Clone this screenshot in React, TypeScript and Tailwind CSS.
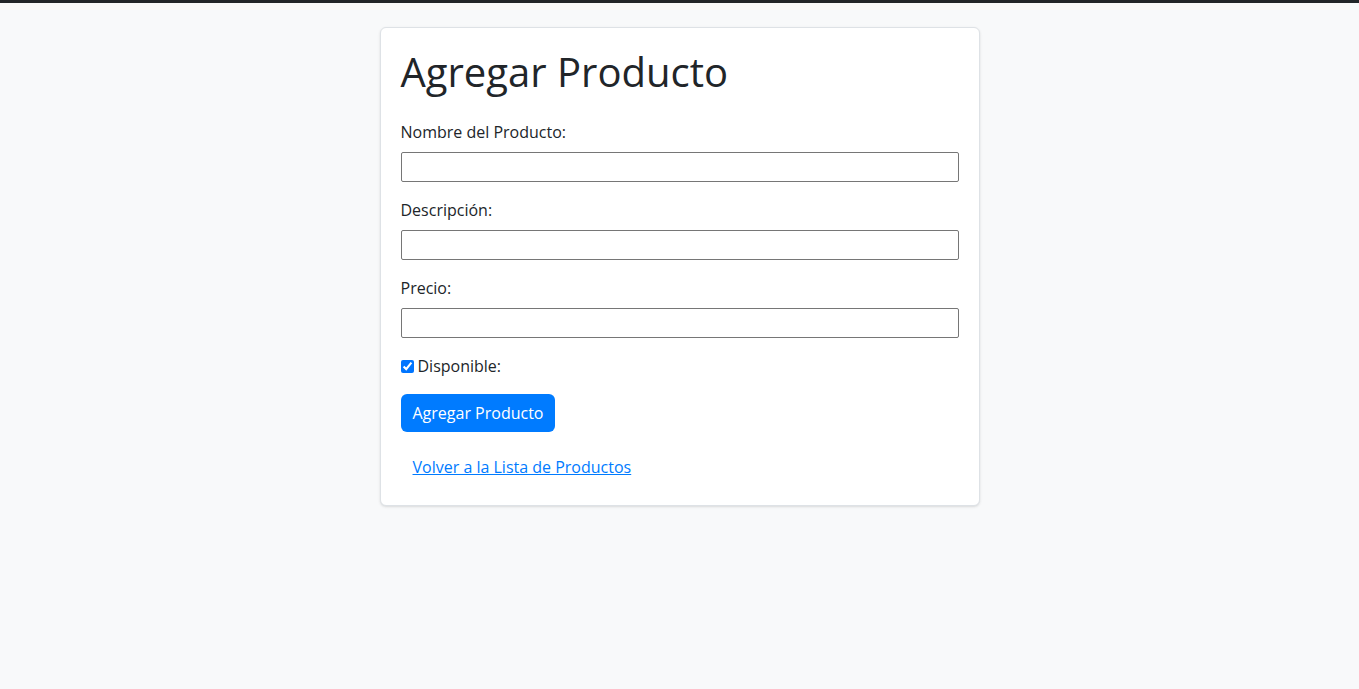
import { useState } from "react";

const fields = [
    { id: "nombre", label: "Nombre del Producto:" },
    { id: "descripcion", label: "Descripción:" },
    { id: "precio", label: "Precio:" },
];

export default function App() {
    const [disponible, setDisponible] = useState(true);

    return (
        <div className="min-h-[689px] bg-[#f8f9fa] border-t-[3px] border-[#212529] font-['Open_Sans',sans-serif] text-[#212529]">
            <div className="flex justify-center pt-6">
                <div className="w-[600px] bg-white border border-[#dee2e6] rounded-md shadow-sm p-5">
                    <h1 className="text-[40px] leading-[48px] mb-6">Agregar Producto</h1>

                    <form onSubmit={(e) => e.preventDefault()}>
                        {fields.map((f) => (
                            <div key={f.id} className="mb-4">
                                <label htmlFor={f.id} className="block text-base leading-6 mb-2">
                                    {f.label}
                                </label>
                                <input
                                    id={f.id}
                                    type="text"
                                    className="block w-[558px] h-[30px] border border-[#767676] rounded-[2px] px-1 text-sm"
                                />
                            </div>
                        ))}

                        <div className="flex items-center h-6 mb-4">
                            <input
                                id="disponible"
                                type="checkbox"
                                checked={disponible}
                                onChange={(e) => setDisponible(e.target.checked)}
                                className="w-[13px] h-[13px] m-0 mr-1 accent-[#0075ff]"
                            />
                            <label htmlFor="disponible" className="text-base leading-6">
                                Disponible:
                            </label>
                        </div>

                        <button
                            type="submit"
                            className="h-[38px] px-3 rounded-md bg-[#007bff] text-white text-base leading-6"
                        >
                            Agregar Producto
                        </button>
                    </form>

                    <div className="mt-[17px]">
                        <a href="#" className="inline-block px-3 py-1.5 text-base leading-6 text-[#007bff] underline">
                            Volver a la Lista de Productos
                        </a>
                    </div>
                </div>
            </div>
        </div>
    );
}
